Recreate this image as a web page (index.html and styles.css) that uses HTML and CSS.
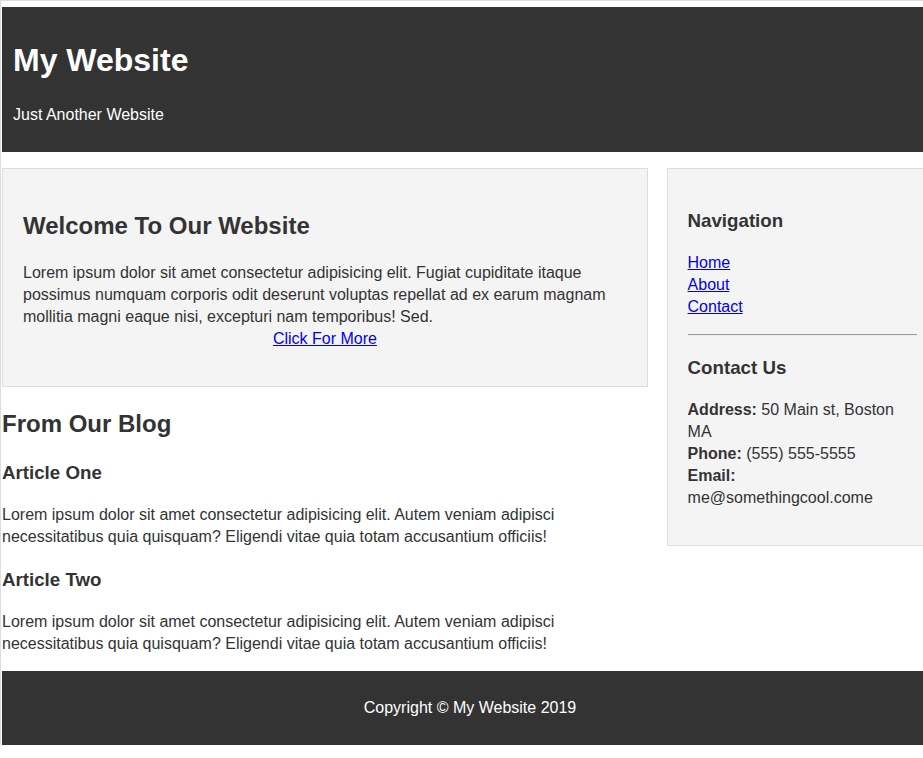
FILE: index.html
```html
<!DOCTYPE html>
<html lang="en">
<head>
<meta charset="utf-8">
<title>My Website</title>
<link rel="stylesheet" href="styles.css">
</head>
<body>
<div class="page">
  <header class="site-header">
    <h1 class="site-title">My Website</h1>
    <p class="site-tagline">Just Another Website</p>
  </header>

  <div class="columns">
    <main class="main-col">
      <section class="welcome">
        <h2 class="welcome-title">Welcome To Our Website</h2>
        <p class="welcome-text">Lorem ipsum dolor sit amet consectetur adipisicing elit. Fugiat cupiditate itaque possimus numquam corporis odit deserunt voluptas repellat ad ex earum magnam mollitia magni eaque nisi, excepturi nam temporibus! Sed.<a class="more-link" href="#">Click For More</a></p>
      </section>

      <section class="blog">
        <h2 class="blog-title">From Our Blog</h2>
        <article class="article">
          <h3 class="article-title">Article One</h3>
          <p class="article-text">Lorem ipsum dolor sit amet consectetur adipisicing elit. Autem veniam adipisci necessitatibus quia quisquam? Eligendi vitae quia totam accusantium officiis!</p>
        </article>
        <article class="article">
          <h3 class="article-title">Article Two</h3>
          <p class="article-text">Lorem ipsum dolor sit amet consectetur adipisicing elit. Autem veniam adipisci necessitatibus quia quisquam? Eligendi vitae quia totam accusantium officiis!</p>
        </article>
      </section>
    </main>

    <aside class="sidebar">
      <h3 class="side-title">Navigation</h3>
      <ul class="side-nav">
        <li><a href="#">Home</a></li>
        <li><a href="#">About</a></li>
        <li><a href="#">Contact</a></li>
      </ul>
      <hr class="side-rule">
      <h3 class="side-title">Contact Us</h3>
      <p class="contact-info"><strong>Address:</strong> 50 Main st, Boston MA<br><strong>Phone:</strong> (555) 555-5555<br><strong>Email:</strong> me@somethingcool.come</p>
    </aside>
  </div>

  <footer class="site-footer">
    <p class="copyright">Copyright &copy; My Website 2019</p>
  </footer>
</div>
</body>
</html>
```

FILE: styles.css
```css
html, body {
  margin: 0;
  padding: 0;
}

body {
  font-family: "Liberation Sans", Arial, sans-serif;
  font-size: 16px;
  line-height: 1.375;
  color: #333;
  background: #fff;
  border-top: 1px solid #ddd;
  border-left: 1px solid #ddd;
  padding: 6px 0 0 1px;
}

.page {
  width: 936px;
}

.site-header {
  background: #333;
  color: #fff;
  padding: 10px 11px;
}

.site-title {
  font-size: 32px;
  margin: 21.44px 0;
}

.site-tagline {
  margin: 16px 0;
}

.columns {
  display: flex;
  justify-content: space-between;
  align-items: flex-start;
  margin-top: 16px;
}

.main-col {
  width: 69%;
}

.welcome {
  background: #f4f4f4;
  border: 1px solid #ddd;
  padding: 20px;
}

.welcome-title,
.blog-title {
  font-size: 24px;
  margin: 19.92px 0;
}

.welcome-text {
  margin: 16px 0;
}

.more-link {
  display: block;
  text-align: center;
  color: #0000ee;
}

.article-title,
.side-title {
  font-size: 18.72px;
  margin: 18.72px 0;
}

.article-text {
  margin: 16px 0;
}

.sidebar {
  width: 29%;
  box-sizing: border-box;
  background: #f4f4f4;
  border: 1px solid #ddd;
  padding: 20px;
}

.side-nav {
  list-style: none;
  padding: 0;
  margin: 16px 0;
}

.side-nav a {
  color: #0000ee;
}

.side-rule {
  margin: 8px 0;
  border: 0;
  border-top: 1px solid #9a9a9a;
  border-bottom: 1px solid #eee;
}

.contact-info {
  margin: 16px 0;
}

.site-footer {
  background: #333;
  color: #fff;
  text-align: center;
  padding: 10px;
}

.copyright {
  margin: 16px 0;
}
```
